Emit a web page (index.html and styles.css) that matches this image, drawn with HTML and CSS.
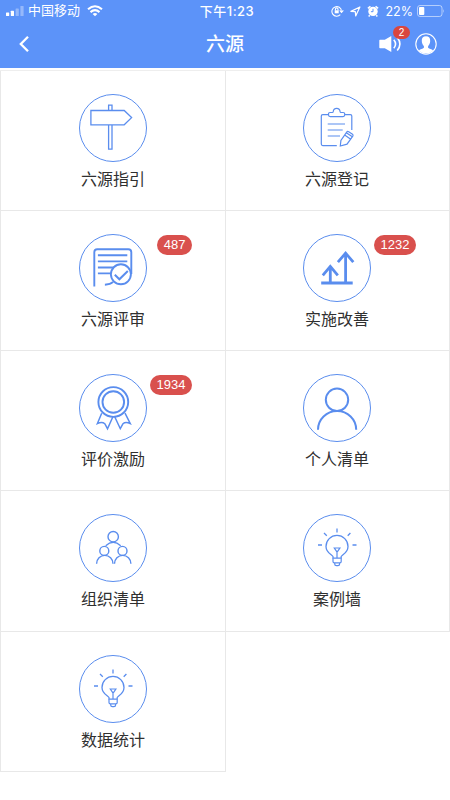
FILE: index.html
```html
<!DOCTYPE html>
<html lang="zh-CN">
<head>
<meta charset="utf-8">
<title>六源</title>
<link rel="stylesheet" href="styles.css">
</head>
<body>
<header class="header">
  <div class="status">
    <div class="status-left">
      <svg class="signal" width="18" height="10" viewBox="0 0 18 10" fill="#fff"><rect y="6.5" width="3.2" height="3.5" rx=".6"/><rect x="4.8" y="4.7" width="3.2" height="5.3" rx=".6"/><g opacity=".35"><rect x="9.6" y="2.5" width="3.2" height="7.5" rx=".6"/><rect x="14.4" width="3.2" height="10" rx=".6"/></g></svg>
      <span class="carrier">中国移动</span>
      <svg class="wifi" width="16" height="12" viewBox="0 0 16 12" fill="none" stroke="#fff" stroke-width="2.1"><path d="M1 4.3Q8-1.8 15 4.3M3.5 7.1Q8 3.2 12.5 7.1"/><path d="M8 11.2 5.6 8.9Q8 7.1 10.4 8.9Z" fill="#fff" stroke="none"/></svg>
    </div>
    <span class="time">下午1:23</span>
    <div class="status-right">
      <svg width="13" height="12" viewBox="0 0 13 12" fill="none" stroke="#fff" stroke-width="1.1"><path d="M9.3 9.6A4.8 4.8 0 1 1 10.5 5.8"/><path d="m8.8 5.4 1.7 2 1.8-2" /><rect x="3.7" y="5.3" width="4" height="3" fill="#fff" stroke="none"/><path d="M4.4 5.5V4.2a1.3 1.3 0 0 1 2.6 0v1.3"/></svg>
      <svg class="loc" width="11" height="11" viewBox="0 0 11 11" fill="none" stroke="#fff" stroke-width="1.2" stroke-linejoin="round"><path d="M.9 5.4 9.9 1 5.7 10 5.3 5.7Z"/></svg>
      <svg class="alarm" width="12" height="12" viewBox="0 0 12 12"><circle cx="6" cy="6.4" r="4.7" fill="#fff"/><path d="M.9 3.4 3.4 1.2M8.6 1.2l2.5 2.2M2.7 10.2l-1 1.2M9.3 10.2l1 1.2" stroke="#fff" stroke-width="1.5"/><path d="M6 3.8v2.9H3.9" stroke="#5c93f9" fill="none"/></svg>
      <span class="percent">22%</span>
      <svg class="battery" width="28" height="12" viewBox="0 0 28 12"><rect x=".5" y=".5" width="24.5" height="11" rx="2.5" fill="none" stroke="#fff" stroke-opacity=".55"/><rect x="2" y="2" width="5.3" height="8" rx="1" fill="#fff"/><path d="M26.3 4q1.5 2 0 4Z" fill="#fff" opacity=".6"/></svg>
    </div>
  </div>
  <div class="nav">
    <svg class="back" width="12" height="18" viewBox="0 0 12 18" fill="none" stroke="#fff" stroke-width="2.3"><path d="M10 1.7 2.8 9l7.2 7.2"/></svg>
    <h1 class="title">六源</h1>
    <div class="tools">
      <div class="sound">
        <svg width="24" height="18" viewBox="0 0 24 18"><path d="M1 4.8h4.8L12.3.9v16.2l-6.5-3.9H1q-.7 0-.7-.7v-7q0-.7.7-.7Z" fill="#fff"/><path d="M14.8 4.7q3.5 4.3 0 8.6M18.2 2.5q5.4 6.5 0 13" fill="none" stroke="#fff" stroke-width="1.6"/></svg>
        <span class="dot">2</span>
      </div>
      <svg width="22" height="22" viewBox="0 0 22 22"><circle cx="11" cy="11" r="10.2" fill="none" stroke="#fff" stroke-width="1.1"/><path d="M11 3.2c-3 0-4.4 2-4.2 4.7.1 2.5 1.1 4 2.1 5.1v1.8c-1 1.2-3.6 1.3-5 2.7A9.5 9.5 0 0 0 11 20.6a9.5 9.5 0 0 0 7.1-3.1c-1.4-1.4-4-1.5-5-2.7V13c1-1.1 2-2.6 2.1-5.1.2-2.7-1.2-4.7-4.2-4.7Z" fill="#fff"/></svg>
    </div>
  </div>
</header>

<svg class="defs" width="0" height="0">
  <symbol id="bulb" viewBox="0 0 68 68">
    <path d="M30 44.2v-1.6c0-1.8-7-3.3-7-10.2a11 11 0 0 1 22 0c0 6.9-6.8 8.4-6.8 10.2v1.6Z" stroke-width="1.3"/>
    <path d="M30 44.2v3.3q0 1.4 1.4 1.4h5.4q1.4 0 1.4-1.4v-3.3M31.7 49v1q0 1.7 1.7 1.7h1.5q1.7 0 1.7-1.7v-1M34 44v-6.5M31.3 34h5.6L34.1 38.2Z" stroke-width="1.2"/>
    <path d="M34 14.6v4M21 19l2.8 2.7M47.4 19l-2.7 2.7M15 31h4M49.5 31h4" stroke-width="1.3"/>
  </symbol>
</svg>

<main class="grid">
  <a class="cell">
    <svg class="icon" viewBox="0 0 68 68"><circle cx="34" cy="34" r="33.5"/><path d="M11.9 16.5h33.3l7.4 7.1-7.4 7.2H11.9ZM29.6 16.5v-5.4H33v5.4M29.6 30.8v24.4H33V30.8" stroke-width="1.3"/></svg>
    <span class="label">六源指引</span>
  </a>
  <a class="cell">
    <svg class="icon" viewBox="0 0 68 68"><circle cx="34" cy="34" r="33.5"/><path d="M25.5 20.6h-5.7q-1.5 0-1.5 1.5v28q0 1.5 1.5 1.5h14M41.7 20.6h5.6q1.5 0 1.5 1.5V36M27.2 22.6q-1.7 0-1.7-1.5v-1.3q0-1.3 1.5-1.3h2.3q.8 0 .9-.8c.4-4.5 6.5-4.5 6.9 0q.1.8.9.8h2.2q1.5 0 1.5 1.3v1.3q0 1.5-1.7 1.5ZM24.7 30H42M24.7 36h15M24.7 42H37M37.3 52l.6-5.5 5.8-8.4q.8-1.1 2-.4l3.8 2.5q1 .8.3 1.9l-5.8 8.1ZM41.7 41l5.7 3.9M43.3 38.7l5.7 3.9" stroke-width="1.2"/></svg>
    <span class="label">六源登记</span>
  </a>
  <a class="cell">
    <svg class="icon" viewBox="0 0 68 68"><circle cx="34" cy="34" r="33.5"/><path d="M15.3 52.5V18.3q0-3 3-3h31q3 0 3 3V40M18.9 21.3h29.4M18.9 27.4h29.4M18.9 33.5H35M18.9 39.4h13M25.9 50.7q5.5-.2 8.3-2.8" stroke-width="1.9"/><circle cx="41.9" cy="40.3" r="10" stroke-width="1.9"/><path d="m35.8 40.7 4.6 4.6 8.4-8.3" stroke-width="2"/></svg>
    <span class="label">六源评审</span><span class="badge">487</span>
  </a>
  <a class="cell">
    <svg class="icon" viewBox="0 0 68 68"><circle cx="34" cy="34" r="33.5"/><path d="M18.2 49h31.5M27.3 49V32M19.8 41.3l7.5-8.9 7.5 8.9M42.6 49V19M34.9 28.2l7.7-9 7.7 9" stroke-width="2.8"/></svg>
    <span class="label">实施改善</span><span class="badge">1232</span>
  </a>
  <a class="cell">
    <svg class="icon" viewBox="0 0 68 68"><circle cx="34" cy="34" r="33.5"/><circle cx="34.3" cy="28" r="14.9" stroke-width="1.9"/><circle cx="34.3" cy="28" r="10.8" stroke-width="1.9"/><path d="m22.7 39.2-4.3 10.3q4.7-2.1 7.4.2l2.7 5 5.5-12.2M46 39.2l5.2 10.3q-4.7-2.1-7.2.2l-2.7 5-5.7-12.2" stroke-width="1.5"/></svg>
    <span class="label">评价激励</span><span class="badge">1934</span>
  </a>
  <a class="cell">
    <svg class="icon" viewBox="0 0 68 68"><circle cx="34" cy="34" r="33.5"/><circle cx="34" cy="25.8" r="11.2" stroke-width="2"/><path d="M15 55.8a19.1 18.7 0 0 1 38.2 0" stroke-width="2"/></svg>
    <span class="label">个人清单</span>
  </a>
  <a class="cell">
    <svg class="icon" viewBox="0 0 68 68"><circle cx="34" cy="34" r="33.5"/><g stroke-width="1.4"><circle cx="34.2" cy="22.7" r="5.2"/><path d="M26.7 31.7q7.5-7 15 0"/><circle cx="25.3" cy="36.9" r="4.5"/><path d="M17.6 49.8a8.2 8.4 0 0 1 16.4 0"/><circle cx="43.5" cy="36.9" r="4.5"/><path d="M35.5 49.8a8.2 8.4 0 0 1 16.4 0"/></g></svg>
    <span class="label">组织清单</span>
  </a>
  <a class="cell">
    <svg class="icon" viewBox="0 0 68 68"><circle cx="34" cy="34" r="33.5"/><use href="#bulb"/></svg>
    <span class="label">案例墙</span>
  </a>
  <a class="cell">
    <svg class="icon" viewBox="0 0 68 68"><circle cx="34" cy="34" r="33.5"/><use href="#bulb"/></svg>
    <span class="label">数据统计</span>
  </a>
</main>
</body>
</html>
```

FILE: styles.css
```css
* { box-sizing: border-box; }
body {
  margin: 0;
  background: #fff;
  color: #303030;
  font-family: "Liberation Sans", "Noto Sans CJK SC", sans-serif;
}
svg { display: block; flex: none; }
.defs { position: absolute; }

.header { height: 68px; background: #5c93f9; color: #fff; }
.status {
  display: grid;
  grid-template-columns: 1fr auto 1fr;
  align-items: center;
  height: 22px;
  padding: 0 5px 0 6px;
}
.status-left, .status-right { display: flex; align-items: center; }
.status-right { justify-content: flex-end; }
.carrier { margin-left: 4px; font-size: 13px; line-height: 22px; }
.wifi { margin-left: 7px; }
.time {
  margin-left: 3px;
  font-family: Inter, "Noto Sans CJK SC", sans-serif;
  font-size: 13px;
  font-weight: 500;
  line-height: 22px;
  letter-spacing: .5px;
}
.loc { margin-left: 6px; }
.alarm { margin-left: 6px; }
.percent { margin: 0 4px 0 6px; font-family: Inter, sans-serif; font-size: 12.5px; }

.nav {
  display: grid;
  grid-template-columns: 1fr auto 1fr;
  align-items: center;
  height: 44px;
  padding: 0 13px 0 18px;
}
.title {
  margin: 0 0 0 -5px;
  padding-top: 2px;
  font-size: 19px;
  font-weight: 500;
  line-height: 42px;
}
.tools { display: flex; justify-content: flex-end; align-items: center; gap: 12px; }
.sound { position: relative; }
.dot {
  position: absolute;
  top: -9px;
  left: 14px;
  width: 17px;
  height: 13px;
  border-radius: 7px;
  background: #d9463f;
  font-size: 10px;
  line-height: 13px;
  text-align: center;
}

.grid {
  display: grid;
  grid-template-columns: 226px 224px;
  grid-auto-rows: 140.3px;
  margin-top: 1.5px;
  border-top: 1px solid #eee;
}
.cell {
  position: relative;
  display: flex;
  flex-direction: column;
  align-items: center;
  padding-top: 23.1px;
  border-right: 1px solid #e8e8e8;
  border-bottom: 1px solid #e8e8e8;
}
.cell:nth-child(odd) { border-left: 1px solid #e8e8e8; }
.cell:nth-child(even) { padding-right: 1px; }
.icon { width: 68px; height: 68px; fill: none; stroke: #5a8dee; stroke-width: 1; }
.label { margin-top: 6px; font-size: 16px; line-height: 24px; }
.badge {
  position: absolute;
  top: 24px;
  right: 33px;
  height: 20px;
  padding: 0 6.5px;
  border-radius: 10px;
  background: #d9504d;
  color: #fff;
  font-size: 13px;
  line-height: 20px;
}
```
